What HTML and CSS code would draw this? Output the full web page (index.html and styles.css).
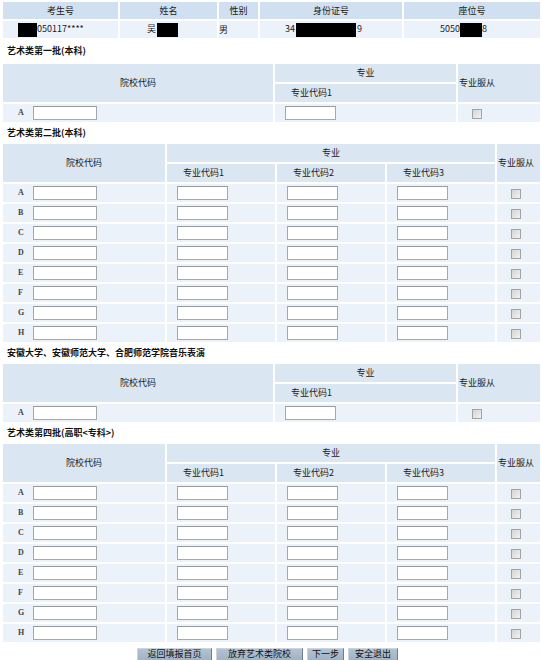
FILE: index.html
```html
<!DOCTYPE html>
<html lang="zh-CN">
<head>
<meta charset="utf-8">
<title>艺术类志愿填报</title>
<link rel="stylesheet" href="styles.css">
</head>
<body>
<div class="page">
  <table class="grid info">
    <colgroup><col class="i1"><col class="i2"><col class="i3"><col class="i4"><col class="i5"></colgroup>
    <tr class="hd"><td>考生号</td><td>姓名</td><td>性别</td><td>身份证号</td><td>座位号</td></tr>
    <tr class="dt">
      <td class="k1"><span class="redact r1"></span>050117****</td>
      <td class="k2">吴<span class="redact r2"></span></td>
      <td class="k3">男</td>
      <td class="k4">34<span class="redact r4"></span>9</td>
      <td class="k5">5050<span class="redact r5"></span>8</td>
    </tr>
  </table>

  <div class="title first">艺术类第一批(本科)</div>
  <table class="grid one">
    <colgroup><col class="a1"><col class="a2"><col class="a3"></colgroup>
    <tr class="hd"><td rowspan="2">院校代码</td><td>专业</td><td rowspan="2" class="obey">专业服从</td></tr>
    <tr class="hd"><td class="code">专业代码1</td></tr>
    <tr class="dt"><td class="sch"><span class="letter">A</span><input class="in-sch" type="text"></td><td class="maj"><input class="in-maj" type="text"></td><td class="chk"><input type="checkbox"></td></tr>
  </table>

  <div class="title">艺术类第二批(本科)</div>
  <table class="grid three">
    <colgroup><col class="b1"><col class="b2"><col class="b2"><col class="b2"><col class="b5"></colgroup>
    <tr class="hd"><td rowspan="2">院校代码</td><td colspan="3">专业</td><td rowspan="2" class="obey">专业服从</td></tr>
    <tr class="hd"><td class="code">专业代码1</td><td class="code">专业代码2</td><td class="code">专业代码3</td></tr>
    <tr class="dt"><td class="sch"><span class="letter">A</span><input class="in-sch" type="text"></td><td class="maj"><input class="in-maj" type="text"></td><td class="maj"><input class="in-maj" type="text"></td><td class="maj"><input class="in-maj" type="text"></td><td class="chk"><input type="checkbox"></td></tr>
    <tr class="dt"><td class="sch"><span class="letter">B</span><input class="in-sch" type="text"></td><td class="maj"><input class="in-maj" type="text"></td><td class="maj"><input class="in-maj" type="text"></td><td class="maj"><input class="in-maj" type="text"></td><td class="chk"><input type="checkbox"></td></tr>
    <tr class="dt"><td class="sch"><span class="letter">C</span><input class="in-sch" type="text"></td><td class="maj"><input class="in-maj" type="text"></td><td class="maj"><input class="in-maj" type="text"></td><td class="maj"><input class="in-maj" type="text"></td><td class="chk"><input type="checkbox"></td></tr>
    <tr class="dt"><td class="sch"><span class="letter">D</span><input class="in-sch" type="text"></td><td class="maj"><input class="in-maj" type="text"></td><td class="maj"><input class="in-maj" type="text"></td><td class="maj"><input class="in-maj" type="text"></td><td class="chk"><input type="checkbox"></td></tr>
    <tr class="dt"><td class="sch"><span class="letter">E</span><input class="in-sch" type="text"></td><td class="maj"><input class="in-maj" type="text"></td><td class="maj"><input class="in-maj" type="text"></td><td class="maj"><input class="in-maj" type="text"></td><td class="chk"><input type="checkbox"></td></tr>
    <tr class="dt"><td class="sch"><span class="letter">F</span><input class="in-sch" type="text"></td><td class="maj"><input class="in-maj" type="text"></td><td class="maj"><input class="in-maj" type="text"></td><td class="maj"><input class="in-maj" type="text"></td><td class="chk"><input type="checkbox"></td></tr>
    <tr class="dt"><td class="sch"><span class="letter">G</span><input class="in-sch" type="text"></td><td class="maj"><input class="in-maj" type="text"></td><td class="maj"><input class="in-maj" type="text"></td><td class="maj"><input class="in-maj" type="text"></td><td class="chk"><input type="checkbox"></td></tr>
    <tr class="dt"><td class="sch"><span class="letter">H</span><input class="in-sch" type="text"></td><td class="maj"><input class="in-maj" type="text"></td><td class="maj"><input class="in-maj" type="text"></td><td class="maj"><input class="in-maj" type="text"></td><td class="chk"><input type="checkbox"></td></tr>
  </table>

  <div class="title">安徽大学、安徽师范大学、合肥师范学院音乐表演</div>
  <table class="grid one">
    <colgroup><col class="a1"><col class="a2"><col class="a3"></colgroup>
    <tr class="hd"><td rowspan="2">院校代码</td><td>专业</td><td rowspan="2" class="obey">专业服从</td></tr>
    <tr class="hd"><td class="code">专业代码1</td></tr>
    <tr class="dt"><td class="sch"><span class="letter">A</span><input class="in-sch" type="text"></td><td class="maj"><input class="in-maj" type="text"></td><td class="chk"><input type="checkbox"></td></tr>
  </table>

  <div class="title">艺术类第四批(高职&lt;专科&gt;)</div>
  <table class="grid three">
    <colgroup><col class="b1"><col class="b2"><col class="b2"><col class="b2"><col class="b5"></colgroup>
    <tr class="hd"><td rowspan="2">院校代码</td><td colspan="3">专业</td><td rowspan="2" class="obey">专业服从</td></tr>
    <tr class="hd"><td class="code">专业代码1</td><td class="code">专业代码2</td><td class="code">专业代码3</td></tr>
    <tr class="dt"><td class="sch"><span class="letter">A</span><input class="in-sch" type="text"></td><td class="maj"><input class="in-maj" type="text"></td><td class="maj"><input class="in-maj" type="text"></td><td class="maj"><input class="in-maj" type="text"></td><td class="chk"><input type="checkbox"></td></tr>
    <tr class="dt"><td class="sch"><span class="letter">B</span><input class="in-sch" type="text"></td><td class="maj"><input class="in-maj" type="text"></td><td class="maj"><input class="in-maj" type="text"></td><td class="maj"><input class="in-maj" type="text"></td><td class="chk"><input type="checkbox"></td></tr>
    <tr class="dt"><td class="sch"><span class="letter">C</span><input class="in-sch" type="text"></td><td class="maj"><input class="in-maj" type="text"></td><td class="maj"><input class="in-maj" type="text"></td><td class="maj"><input class="in-maj" type="text"></td><td class="chk"><input type="checkbox"></td></tr>
    <tr class="dt"><td class="sch"><span class="letter">D</span><input class="in-sch" type="text"></td><td class="maj"><input class="in-maj" type="text"></td><td class="maj"><input class="in-maj" type="text"></td><td class="maj"><input class="in-maj" type="text"></td><td class="chk"><input type="checkbox"></td></tr>
    <tr class="dt"><td class="sch"><span class="letter">E</span><input class="in-sch" type="text"></td><td class="maj"><input class="in-maj" type="text"></td><td class="maj"><input class="in-maj" type="text"></td><td class="maj"><input class="in-maj" type="text"></td><td class="chk"><input type="checkbox"></td></tr>
    <tr class="dt"><td class="sch"><span class="letter">F</span><input class="in-sch" type="text"></td><td class="maj"><input class="in-maj" type="text"></td><td class="maj"><input class="in-maj" type="text"></td><td class="maj"><input class="in-maj" type="text"></td><td class="chk"><input type="checkbox"></td></tr>
    <tr class="dt"><td class="sch"><span class="letter">G</span><input class="in-sch" type="text"></td><td class="maj"><input class="in-maj" type="text"></td><td class="maj"><input class="in-maj" type="text"></td><td class="maj"><input class="in-maj" type="text"></td><td class="chk"><input type="checkbox"></td></tr>
    <tr class="dt"><td class="sch"><span class="letter">H</span><input class="in-sch" type="text"></td><td class="maj"><input class="in-maj" type="text"></td><td class="maj"><input class="in-maj" type="text"></td><td class="maj"><input class="in-maj" type="text"></td><td class="chk"><input type="checkbox"></td></tr>
  </table>

  <div class="actions">
    <button class="btn w-home" type="button">返回填报首页</button>
    <button class="btn w-give" type="button">放弃艺术类院校</button>
    <button class="btn w-next" type="button">下一步</button>
    <button class="btn w-exit" type="button">安全退出</button>
  </div>
</div>
</body>
</html>
```
FILE: styles.css
```css
html, body {
  margin: 0;
  padding: 0;
  background: #ffffff;
  overflow: hidden;
}
body {
  font-family: "Noto Sans CJK SC", "Noto Sans", sans-serif;
  font-size: 9px;
  color: #1a1a1a;
}
.page {
  padding-left: 1px;
  width: 541px;
}
.grid {
  width: 541px;
  table-layout: fixed;
  border-collapse: separate;
  border-spacing: 2px;
  margin: 0;
}
.grid td {
  padding: 0;
  vertical-align: middle;
  line-height: 12px;
  white-space: nowrap;
  overflow: hidden;
}
.grid .hd td {
  background: #dae6f2;
  text-align: center;
  height: 18px;
}
.grid .dt td {
  background: #ebf2fa;
  height: 18px;
}
.info .hd td {
  background: #d0e0f0;
  height: 17px;
}
.info .dt td {
  height: 17px;
}
.info .i1 { width: 115px; }
.info .i2 { width: 97px; }
.info .i3 { width: 39px; }
.info .i4 { width: 142px; }
.info .i5 { width: 136px; }

.info .dt td { text-align: left; }
.info .k1 { padding-left: 15px; }
.info .k2 { padding-left: 27px; }
.info .k3 { text-align: center; }
.info .k4 { padding-left: 25px; }
.info .k5 { padding-left: 36px; }

.redact {
  display: inline-block;
  background: #000;
  height: 14px;
  vertical-align: middle;
}
.r1 { width: 19px; }
.r2 { width: 21px; margin-left: 1px; }
.r4 { width: 60px; margin-left: 1px; margin-right: 1px; }
.r5 { width: 22px; }

.one .a1 { width: 270px; }
.one .a2 { width: 181px; }
.one .a3 { width: 82px; }

.three .b1 { width: 162px; }
.three .b2 { width: 108px; }
.three .b5 { width: 43px; }

.grid .hd td.obey {
  text-align: left;
  padding-left: 1px;
}
.grid .hd td.code {
  text-align: left;
  padding-left: 16px;
}
.grid td.sch {
  padding-left: 15px;
}
.grid td.maj {
  padding-left: 10px;
}
.grid td.chk {
  padding-left: 14px;
}
.letter {
  display: inline-block;
  width: 15px;
  font-family: "Liberation Serif", serif;
  font-size: 8px;
  font-weight: bold;
  color: #444;
  vertical-align: middle;
}
input[type="text"] {
  box-sizing: border-box;
  height: 14px;
  margin: 0;
  padding: 0;
  border: 1px solid #a7a7a7;
  border-top-color: #9a9a9a;
  background: #fff;
  vertical-align: middle;
  font-size: 9px;
}
.in-sch { width: 64px; }
.in-maj { width: 51px; }
input[type="checkbox"] {
  -webkit-appearance: none;
  appearance: none;
  box-sizing: border-box;
  width: 10px;
  height: 10px;
  margin: 0;
  border: 1px solid #a3a3a3;
  background: linear-gradient(135deg, #d4d4d4, #f2f2f2);
  vertical-align: middle;
}

.title {
  height: 18px;
  line-height: 18px;
  padding-left: 6px;
  font-weight: bold;
  color: #111;
}
.title.first {
  height: 22px;
  line-height: 22px;
}

.actions {
  display: flex;
  justify-content: center;
  gap: 4px;
  margin-top: 4px;
  padding-right: 8px;
}
.btn {
  box-sizing: border-box;
  height: 18px;
  padding: 0 0 6px 0;
  margin: 0;
  font-family: "Noto Sans CJK SC", sans-serif;
  font-size: 9px;
  line-height: 10px;
  color: #111;
  border: 1px solid #6e7c8b;
  border-top-color: #c9d4df;
  border-left-color: #c9d4df;
  background: linear-gradient(#b4c3d2, #98abbf);
}
.w-home { width: 75px; }
.w-give { width: 87px; }
.w-next { width: 37px; }
.w-exit { width: 50px; }
```
